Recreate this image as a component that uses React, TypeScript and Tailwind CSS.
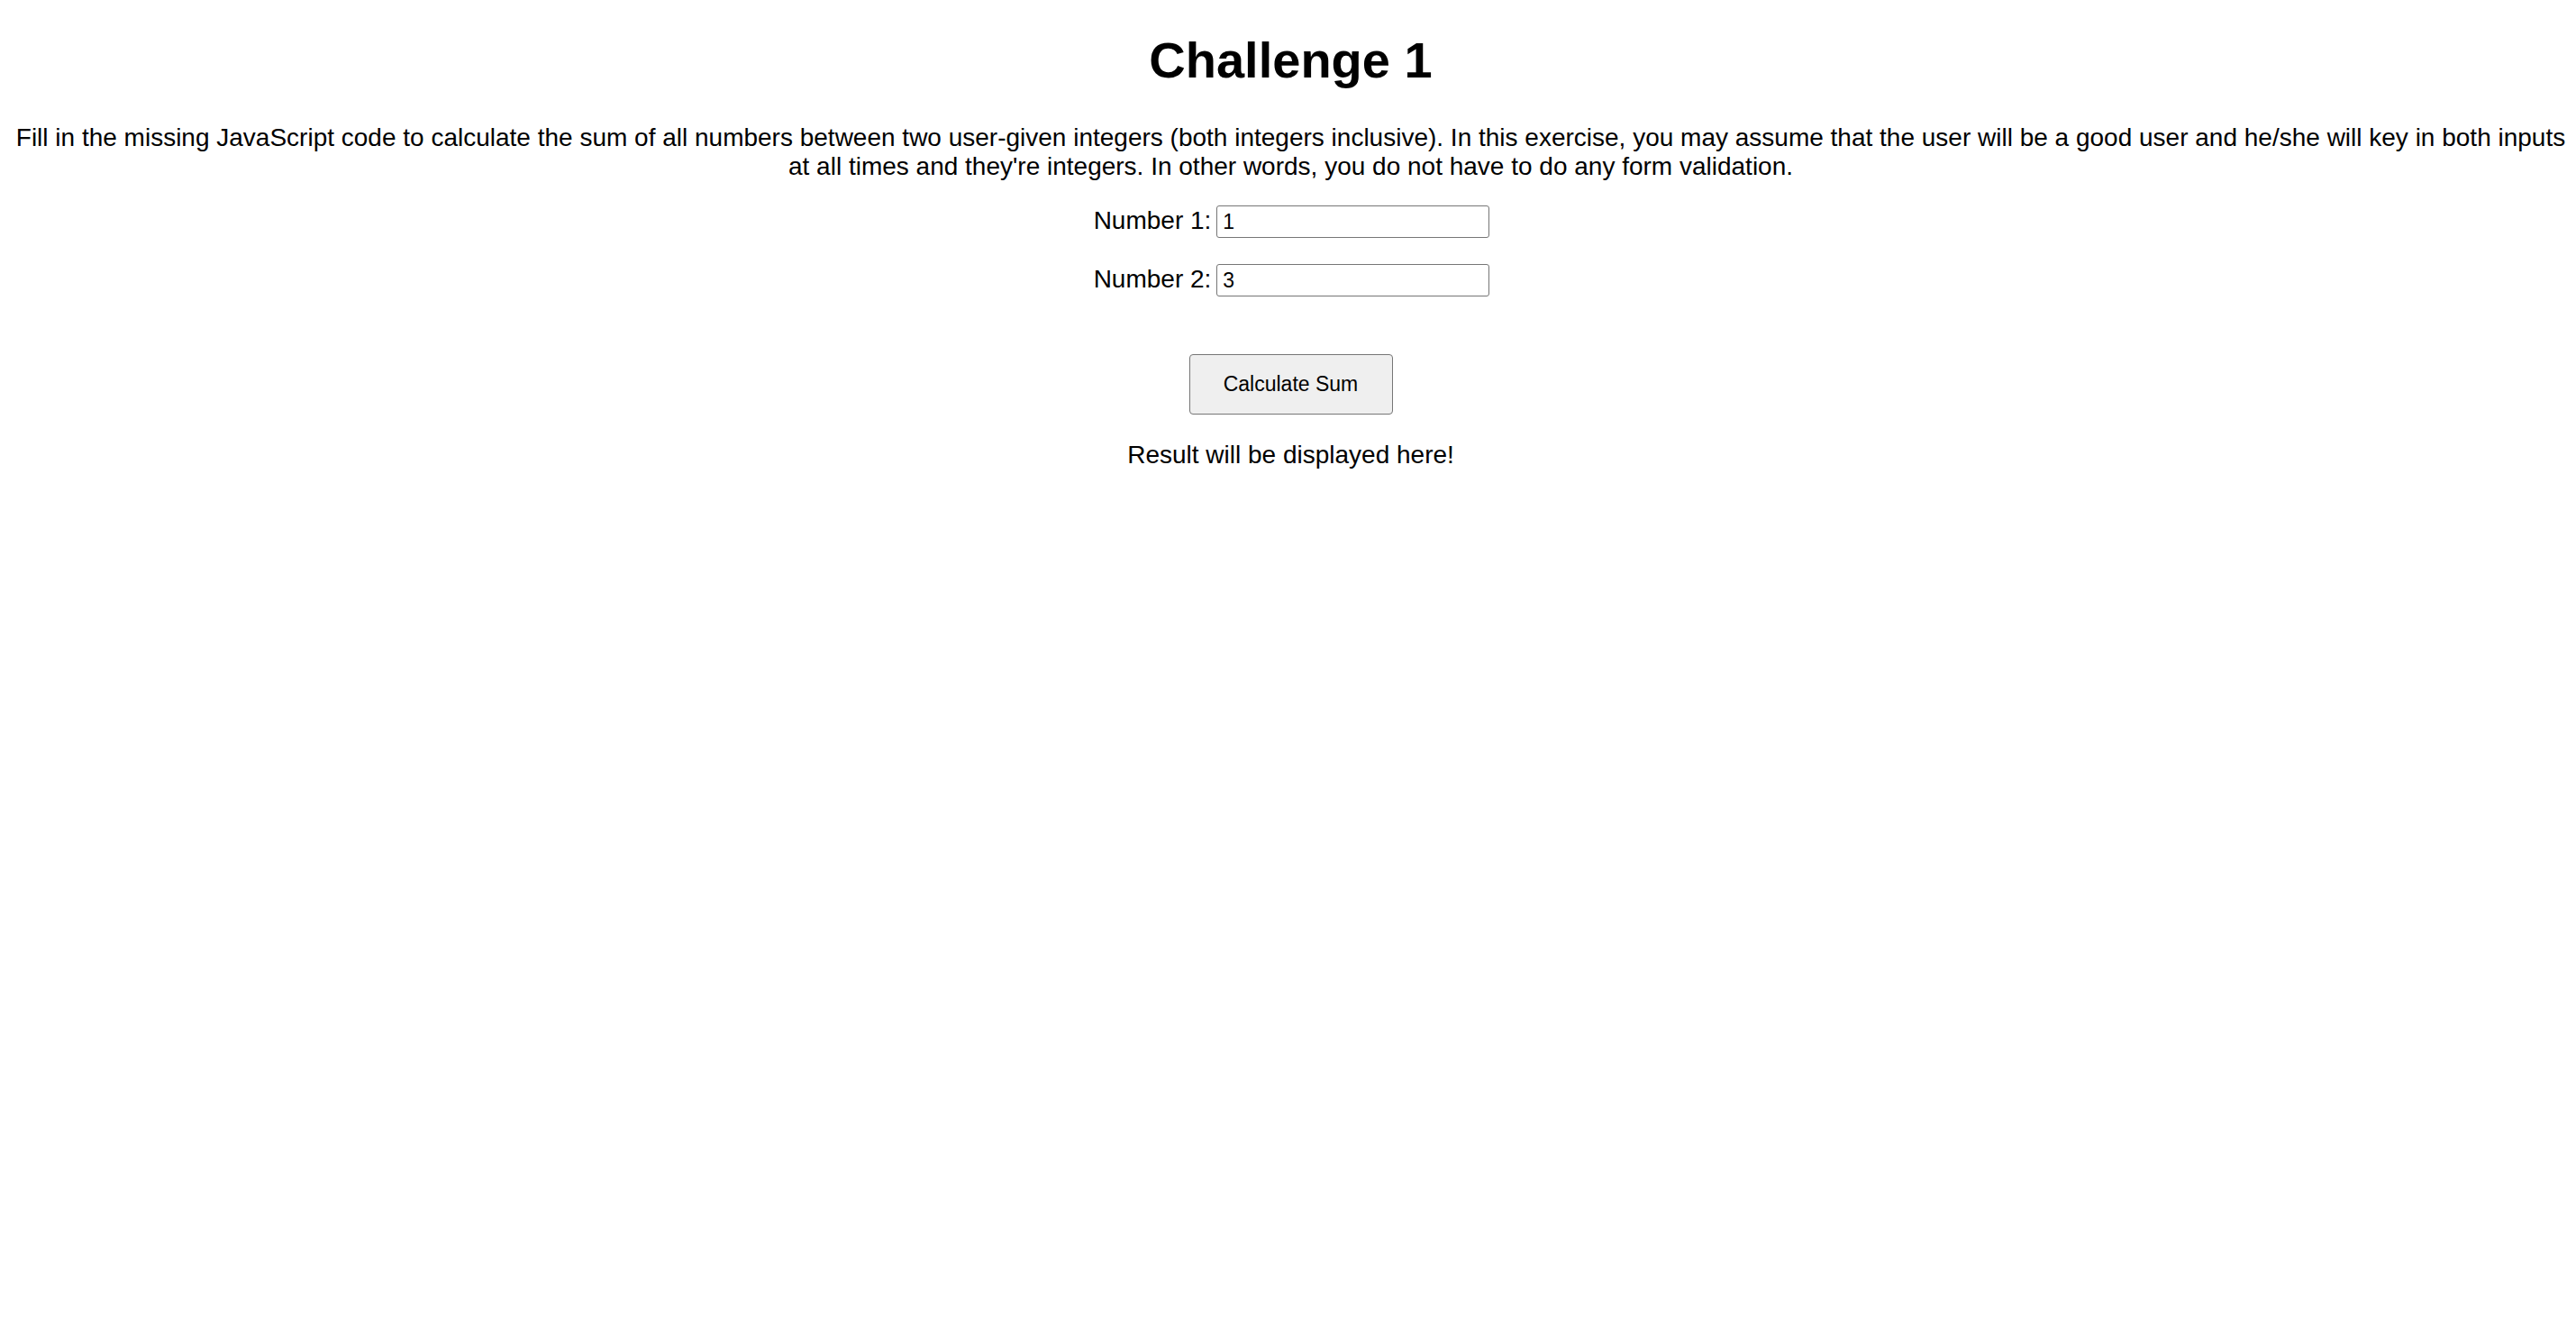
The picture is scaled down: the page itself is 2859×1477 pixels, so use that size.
import React from 'react';

/**
 * Challenge 1 - sum of all numbers between two integers
 */
const App: React.FC = () => {
  return (
    <div
      className="min-h-screen bg-white text-black pl-[17px] pr-[11px] pt-[35px] text-center"
      style={{ fontFamily: '"Liberation Sans", Arial, sans-serif' }}
    >
      {/* Title */}
      <h1 className="text-[56px] leading-[64px] font-bold">Challenge 1</h1>

      {/* Instructions */}
      <p className="mt-[38px] text-[28px] leading-[32px]">
        Fill in the missing JavaScript code to calculate the sum of all numbers between two user-given integers (both
        integers inclusive). In this exercise, you may assume that the user will be a good user and he/she will key in
        both inputs at all times and they're integers. In other words, you do not have to do any form validation.
      </p>

      {/* Inputs */}
      <div className="mt-[27px] pl-[2px] flex flex-col items-center gap-[29px]">
        <div className="flex items-baseline justify-center">
          <label htmlFor="num1" className="text-[28px] leading-[32px] mr-[6px]">
            Number 1:
          </label>
          <input
            id="num1"
            type="text"
            defaultValue="1"
            className="w-[303px] h-[36px] border border-[#767676] rounded-[3px] px-[6px] text-[23px] bg-white outline-none"
          />
        </div>
        <div className="flex items-baseline justify-center">
          <label htmlFor="num2" className="text-[28px] leading-[32px] mr-[6px]">
            Number 2:
          </label>
          <input
            id="num2"
            type="text"
            defaultValue="3"
            className="w-[303px] h-[36px] border border-[#767676] rounded-[3px] px-[6px] text-[23px] bg-white outline-none"
          />
        </div>
      </div>

      {/* Action */}
      <div className="mt-[64px] flex justify-center">
        <button
          type="button"
          className="w-[226px] h-[67px] bg-[#efefef] border border-[#767676] rounded-[4px] text-[23px] text-black"
        >
          Calculate Sum
        </button>
      </div>

      {/* Result */}
      <p className="mt-[29px] text-[28px] leading-[32px]">Result will be displayed here!</p>
    </div>
  );
};

export default App;
